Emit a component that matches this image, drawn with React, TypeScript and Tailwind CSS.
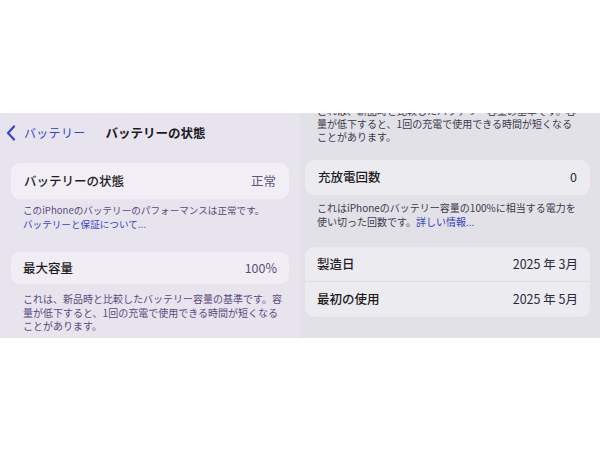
import React from "react";

const font = { fontFamily: '"Noto Sans CJK JP", "Noto Sans", sans-serif' };

export default function App() {
  return (
    <div className="w-[600px] h-[450px] bg-white overflow-hidden" style={font}>
      <div className="h-[113px]" />
      <div className="flex h-[225px]">
        {/* Left screen */}
        <div className="w-[300px] h-full bg-[#e7e4ee] overflow-hidden">
          <div className="h-[40px] flex items-center pl-[6px]">
            <svg width="10" height="16" viewBox="0 0 10 16" className="mr-[8px]">
              <path d="M8 1.5 L2 8 L8 14.5" fill="none" stroke="#3344c8" strokeWidth="2.2" strokeLinecap="round" strokeLinejoin="round" />
            </svg>
            <span className="text-[12px] text-[#3344c8] tracking-[0.3px]">バッテリー</span>
            <span className="ml-[20px] text-[12.5px] font-bold text-[#1a1a1f]">バッテリーの状態</span>
          </div>
          <div className="h-[10px]" />
          <div className="mx-[11px] h-[36px] rounded-[9px] bg-[#f1eff5] flex items-center justify-between px-[13px]">
            <span className="text-[12.5px] font-medium text-[#1f1d24]">バッテリーの状態</span>
            <span className="text-[12.5px] text-[#62557a]">正常</span>
          </div>
          <div className="px-[23px] pt-[4px] text-[9.6px] leading-[14px] text-[#5b4a7c] whitespace-nowrap">
            <div>このiPhoneのバッテリーのパフォーマンスは正常です。</div>
            <div className="text-[#3343c4]">バッテリーと保証について...</div>
          </div>
          <div className="h-[21px]" />
          <div className="mx-[11px] h-[32px] rounded-[9px] bg-[#f0eef4] flex items-center justify-between px-[12px]">
            <span className="text-[12.5px] font-medium text-[#1f1d24]">最大容量</span>
            <span className="text-[12.5px] text-[#5a4c78]">100%</span>
          </div>
          <div className="px-[23px] pt-[8px] text-[10px] leading-[13.5px] text-[#5b4a7c] whitespace-nowrap">
            <div>これは、新品時と比較したバッテリー容量の基準です。容</div>
            <div>量が低下すると、1回の充電で使用できる時間が短くなる</div>
            <div>ことがあります。</div>
          </div>
        </div>
        {/* Right screen */}
        <div className="w-[300px] h-full bg-[#e2e1e8] overflow-hidden">
          <div className="px-[17px] mt-[-9px] text-[10px] leading-[13px] text-[#3c3a48] whitespace-nowrap">
            <div>これは、新品時と比較したバッテリー容量の基準です。容</div>
            <div>量が低下すると、1回の充電で使用できる時間が短くなる</div>
            <div>ことがあります。</div>
          </div>
          <div className="h-[17px]" />
          <div className="ml-[5px] mr-[10px] h-[35px] rounded-[9px] bg-[#ecebf0] flex items-center justify-between px-[13px]">
            <span className="text-[12.5px] font-medium text-[#1d1c22]">充放電回数</span>
            <span className="text-[12.5px] text-[#2a2838]">0</span>
          </div>
          <div className="px-[17px] pt-[6px] text-[10px] leading-[13.5px] text-[#3c3a48] whitespace-nowrap">
            <div>これはiPhoneのバッテリー容量の100%に相当する電力を</div>
            <div>
              使い切った回数です。<span className="text-[#3343c4]">詳しい情報...</span>
            </div>
          </div>
          <div className="h-[19px]" />
          <div className="ml-[5px] mr-[10px] rounded-[9px] bg-[#ecebf0]">
            <div className="h-[35px] flex items-center justify-between px-[12px] border-b border-[#dddce3]">
              <span className="text-[12.5px] font-medium text-[#1d1c22]">製造日</span>
              <span className="text-[12.5px] text-[#2a2838]">2025 年 3月</span>
            </div>
            <div className="h-[35px] flex items-center justify-between px-[12px]">
              <span className="text-[12.5px] font-medium text-[#1d1c22]">最初の使用</span>
              <span className="text-[12.5px] text-[#2a2838]">2025 年 5月</span>
            </div>
          </div>
        </div>
      </div>
    </div>
  );
}
